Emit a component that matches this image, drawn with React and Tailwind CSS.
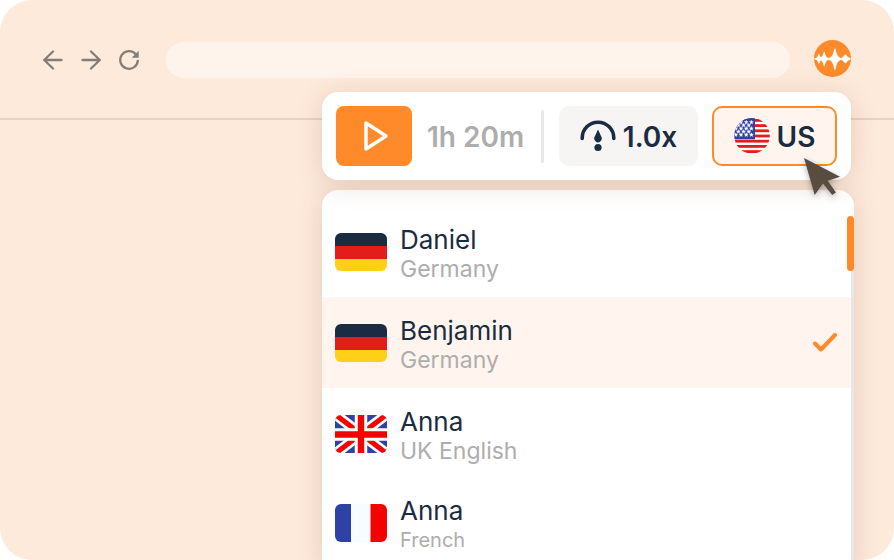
const NavIcon = ({ children }) => (
  <svg
    viewBox="0 0 20 20"
    className="h-5 w-5"
    fill="none"
    stroke="currentColor"
    strokeWidth="2.300"
    strokeLinecap="round"
    strokeLinejoin="round"
    aria-hidden="true"
  >
    {children}
  </svg>
);

const Logo = () => (
  <svg viewBox="0 0 37 37" className="h-[37px] w-[37px] shrink-0" aria-hidden="true">
    <circle cx="18.500" cy="18.500" r="18.500" fill="#ff8a29" />
    <path
      fill="#fff"
      d="M.3 18.600L2.500 17.700Q3.800 17 4.600 14H5.200Q5.800 16.800 7 17.300Q8.700 16.500 9.800 11.800H10.600Q11.600 16.500 13 17.400L15 18Q17.300 17.200 18.400 15.200Q19.600 12.500 20.400 8.500H21.400Q22.200 12.500 23.400 15.200Q24.600 17.500 27 18Q29 17.600 31.100 14.500H31.900Q33.900 17.600 36.700 18.500V19.300Q33.900 20.200 31.900 23.300H31.100Q29 20.300 27 19.700Q24.600 20.500 23.400 22.800Q22.200 25.500 21.400 29.800H20.400Q19.600 25.500 18.400 22.800Q17.300 20.600 15 19.800L13 20.400Q11.600 21.500 10.600 26.300H9.800Q8.700 21.300 7 20.500Q5.800 21 5.200 23.800H4.600Q3.800 20.800 2.500 20.100L.3 19.200Z"
    />
  </svg>
);

const SpeedIcon = () => (
  <svg viewBox="0 0 36 32" className="h-8 w-9 shrink-0" aria-hidden="true">
    <path
      d="M2.200 18.500V18a15.800 15.800 0 0 1 31.600 0v.5"
      fill="none"
      stroke="#1b2b41"
      strokeWidth="3.600"
      strokeLinecap="round"
    />
    <path d="M18 9.500l3 6.500a3.700 4 0 1 1-6 0z" fill="#1b2b41" />
    <circle cx="18" cy="27.500" r="3.600" fill="#1b2b41" />
  </svg>
);

const starRows = [4.2, 7.3, 10.5, 13.6, 16.8];

const UsBadge = () => (
  <svg viewBox="0 0 36 36" className="h-9 w-9 shrink-0" aria-hidden="true">
    <defs>
      <clipPath id="us-round">
        <circle cx="18" cy="17.800" r="17.800" />
      </clipPath>
    </defs>
    <g clipPath="url(#us-round)">
      <rect y="1" width="36" height="33.800" fill="#fff" />
      {[1, 6.2, 11.4, 16.6, 21.8, 27, 32.2].map((y) => (
        <rect key={y} y={y} width="36" height="2.800" fill="#e31d1c" />
      ))}
      <rect width="21" height="21.300" fill="#2e42a5" />
      {starRows.map((y, row) =>
        [1.8, 7, 12.2, 17.4].map((x) => (
          <path
            key={`${x}-${y}`}
            transform={`translate(${row % 2 ? x - 2.6 : x} ${y})`}
            d="M0-2l.6 1.300 1.400.1-1.100.9.400 1.500L0 1l-1.300.8.400-1.500L-2-.6l1.400-.1z"
            fill="#fff"
            stroke="#fff"
            strokeWidth=".3"
          />
        ))
      )}
    </g>
  </svg>
);

const GermanFlag = () => (
  <>
    <rect width="52" height="13" fill="#1b2b41" />
    <rect y="13" width="52" height="13" fill="#e31d1c" />
    <rect y="26" width="52" height="12" fill="#ffd018" />
  </>
);

const UkFlag = () => (
  <>
    <rect width="52" height="38" fill="#2e42a5" />
    <path d="M-3-3l58 44M55-3L-3 41" stroke="#fff" strokeWidth="10.500" />
    <path d="M-3-3l58 44M55-3L-3 41" stroke="#f50100" strokeWidth="5" />
    <path d="M26 0v38M0 19.500h52" stroke="#fff" strokeWidth="12.500" />
    <path d="M26 0v38M0 19.500h52" stroke="#f50100" strokeWidth="6.400" />
  </>
);

const FrenchFlag = () => (
  <>
    <rect width="52" height="38" fill="#f7fcff" />
    <rect width="16" height="38" fill="#2e42a5" />
    <rect x="35.500" width="16.500" height="38" fill="#f50100" />
  </>
);

const voices = [
  { id: 1, name: 'Daniel', country: 'Germany', Flag: GermanFlag },
  { id: 2, name: 'Benjamin', country: 'Germany', Flag: GermanFlag, selected: true },
  { id: 3, name: 'Anna', country: 'UK English', Flag: UkFlag },
  { id: 4, name: 'Anna', country: 'French', Flag: FrenchFlag, small: true },
];

const VoiceRow = ({ voice }) => {
  const { name, country, Flag, selected, small } = voice;
  return (
    <li>
      <button
        type="button"
        aria-pressed={!!selected}
        className={`flex w-full items-center gap-[13px] px-[13px] text-left ${
          small ? 'h-[88px]' : 'h-[91px]'
        } ${selected ? 'bg-[#fff5ee]' : 'bg-transparent'}`}
      >
        <svg
          viewBox="0 0 52 38"
          className="h-[38px] w-[52px] shrink-0 rounded-md"
          aria-hidden="true"
        >
          <Flag />
        </svg>
        <span className="flex flex-1 flex-col pt-1">
          <span className="text-[26px] leading-[30px] text-[#1b2b41]">{name}</span>
          <span
            className={`leading-7 text-[#adadab] ${small ? 'text-[20px]' : 'text-[23px]'}`}
          >
            {country}
          </span>
        </span>
        {selected && (
          <svg viewBox="0 0 26 20" className="h-5 w-[26px] shrink-0" aria-hidden="true">
            <path
              d="M3 10.500l6 6L23 2"
              fill="none"
              stroke="#ff8a29"
              strokeWidth="4"
              strokeLinecap="round"
              strokeLinejoin="round"
            />
          </svg>
        )}
      </button>
    </li>
  );
};

const Toolbar = () => (
  <div className="relative z-10 mr-[3px] flex items-center rounded-2xl bg-white p-[14px] shadow-[0_4px_28px_rgba(90,50,20,0.16)]">
    <button
      type="button"
      aria-label="Play"
      className="flex h-[60px] w-[76px] shrink-0 items-center justify-center rounded-lg bg-[#ff8a29]"
    >
      <svg viewBox="0 0 28 32" className="ml-1 h-8 w-7" aria-hidden="true">
        <path
          d="M4 3v26L24 16z"
          fill="none"
          stroke="#fff"
          strokeWidth="3.500"
          strokeLinejoin="round"
        />
      </svg>
    </button>
    <span className="flex-1 whitespace-nowrap pl-[15px] pt-0.5 text-[28px] font-semibold leading-8 text-[#adadab]">
      1h 20m
    </span>
    <span className="h-[53px] w-[3px] rounded-full bg-[#e8e8e8]" />
    <button
      type="button"
      className="ml-[15px] flex h-[60px] w-[139px] items-center justify-center gap-[7px] rounded-[10px] bg-[#f6f5f4] text-[28px] font-semibold text-[#1b2b41]"
    >
      <SpeedIcon />
      <span className="pt-0.5">1.0x</span>
    </button>
    <button
      type="button"
      className="ml-[14px] flex h-[60px] w-[125px] items-center justify-center gap-[7px] rounded-[10px] border-2 border-[#ff8a29] bg-[#fff5ee] text-[28px] font-semibold text-[#1b2b41]"
    >
      <UsBadge />
      <span className="pt-0.5">US</span>
    </button>

    {/* Mouse pointer */}
    <svg
      viewBox="0 0 48 48"
      className="pointer-events-none absolute right-0 top-[62px] h-12 w-12 drop-shadow-[0_2px_3px_rgba(0,0,0,0.3)]"
      aria-hidden="true"
    >
      <path d="M1 4l36 18.700-12.300 4L33 38.500 29.200 41 20 29.500 11.700 41z" fill="#594d42" />
    </svg>
  </div>
);

const VoiceList = () => (
  <div className="relative flex-1 rounded-t-2xl bg-white shadow-[0_4px_28px_rgba(90,50,20,0.16)]">
    <ul className="mr-[3px] pt-4">
      {voices.map((voice) => (
        <VoiceRow key={voice.id} voice={voice} />
      ))}
    </ul>
    {/* Scrollbar */}
    <div className="absolute bottom-0 right-0 top-8 w-[3px] bg-[#e6e6e6]" />
    <div className="absolute right-0 top-[26px] h-[55px] w-[7px] rounded-full bg-[#ff8a29]" />
  </div>
);

const App = () => (
  <div className="bg-white font-['Inter',sans-serif]">
    <main className="relative h-screen overflow-hidden rounded-[32px] bg-[#feeadb]">
      <header className="flex h-[120px] items-center border-b-2 border-[#e6d3c4] px-[43px] pt-0.5">
        <nav className="flex gap-[18px] text-[#857d75]">
          <button type="button" aria-label="Back">
            <NavIcon>
              <path d="M18.500 10H1.200M10 1.500L1.200 10l8.800 8.500" />
            </NavIcon>
          </button>
          <button type="button" aria-label="Forward">
            <NavIcon>
              <path d="M1.500 10h17.300M10 1.500l8.800 8.500-8.800 8.500" />
            </NavIcon>
          </button>
          <button type="button" aria-label="Reload">
            <NavIcon>
              <path d="M18.800 10.800A8.800 8.800 0 1 1 16.500 4" />
              <path d="M19.700.8v6.900H12.700z" fill="currentColor" stroke="none" />
            </NavIcon>
          </button>
        </nav>
        <input
          type="text"
          aria-label="Address"
          className="ml-[27px] h-9 min-w-0 flex-1 rounded-full bg-[#fff4eb] px-4 outline-none"
        />
        <button type="button" aria-label="Open reader" className="mb-1 ml-6">
          <Logo />
        </button>
      </header>

      <section className="absolute bottom-0 right-10 top-[92px] flex w-[532px] flex-col gap-[10px]">
        <Toolbar />
        <VoiceList />
      </section>
    </main>
  </div>
);

export default App;
